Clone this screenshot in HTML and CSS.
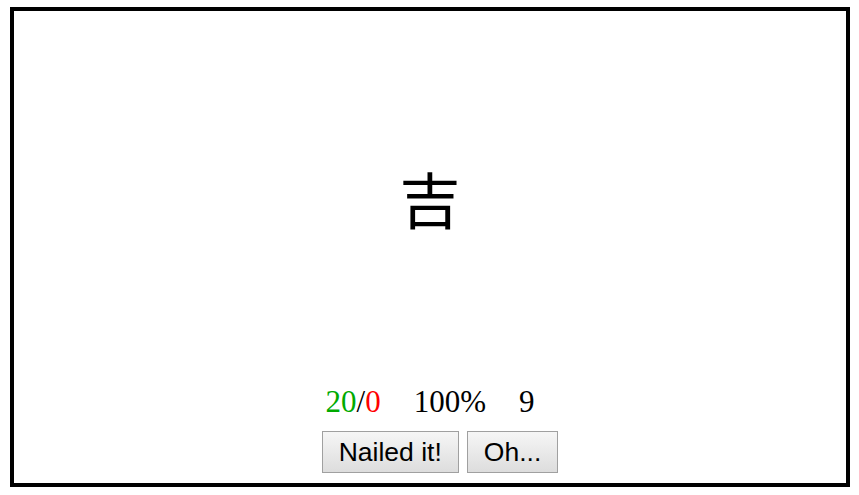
FILE: index.html
```html
<!DOCTYPE html>
<html>
<head>
<meta charset="utf-8">
<link rel="stylesheet" href="styles.css">
</head>
<body>
<div class="card">
  <div class="kanji-area"><span class="kanji">吉</span></div>
  <div class="stats">
    <span class="score"><span class="good">20</span>/<span class="bad">0</span></span>
    <span class="pct">100%</span>
    <span class="left">9</span>
  </div>
  <div class="buttons">
    <button class="btn">Nailed it!</button>
    <button class="btn">Oh...</button>
  </div>
</div>
</body>
</html>
```
FILE: styles.css
```css
html, body {
  margin: 0;
  padding: 0;
  background: #fff;
}
.card {
  box-sizing: border-box;
  margin: 7px 9px 8px 10px;
  height: 480px;
  border: 4px solid #000;
  display: flex;
  flex-direction: column;
  align-items: center;
  padding-bottom: 10px;
}
.kanji-area {
  flex: 1;
  display: flex;
  align-items: center;
  justify-content: center;
  padding-bottom: 2px;
}
.kanji {
  font-family: "Noto Sans CJK JP", serif;
  font-size: 61px;
  line-height: 1;
  color: #000;
}
.stats {
  font-family: "Liberation Serif", serif;
  font-size: 31px;
  line-height: 34px;
  display: flex;
  gap: 33px;
  color: #000;
  margin-bottom: 12px;
}
.good { color: #00aa00; }
.bad { color: #ff0000; }
.buttons {
  display: flex;
  gap: 8px;
  padding-left: 20px;
}
.btn {
  font-family: "Liberation Sans", Arial, sans-serif;
  font-size: 26.5px;
  line-height: 30px;
  padding: 5px 16px;
  border: 1px solid #a0a0a0;
  border-radius: 0;
  background: linear-gradient(#f6f6f6, #dddddd);
  color: #000;
  margin: 0;
}
```
